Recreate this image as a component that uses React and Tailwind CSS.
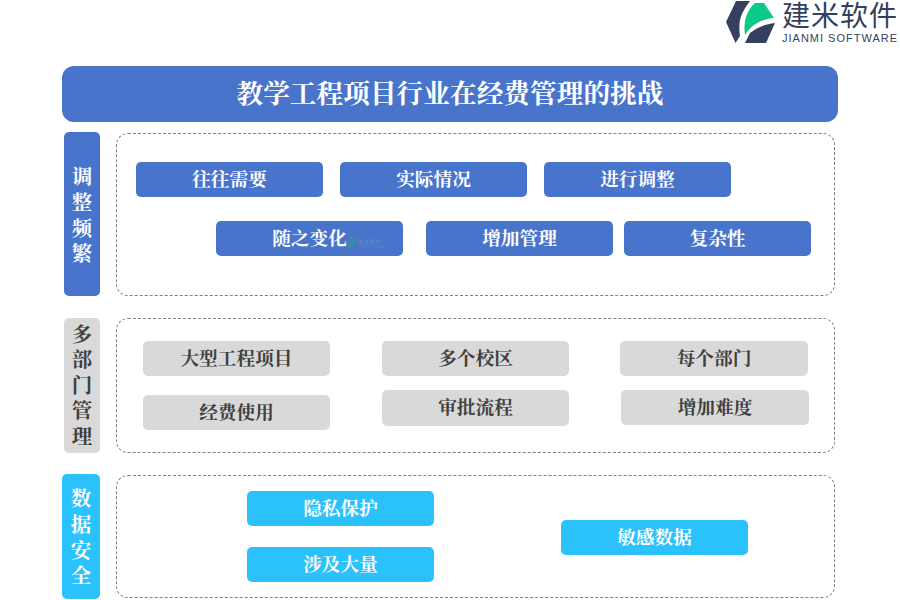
import React from 'react';

const font = "font-['Noto_Serif_CJK_SC','Liberation_Serif','Noto_Sans_CJK_SC',serif]";

const Chip = ({ text, color = 'blue', className = '', children }) => {
    const colors = {
        blue: 'bg-[#4874cb] text-white',
        gray: 'bg-[#d9d9d9] text-[#404040]',
        sky: 'bg-[#2bc1fa] text-white',
    };
    return (
        <div className={`relative flex h-[35px] w-[187px] shrink-0 items-center justify-center rounded-[5px] pb-[3px] text-[18.7px] font-bold ${colors[color]} ${className}`}>
            {text}
            {children}
        </div>
    );
};

const SideLabel = ({ chars, className }) => (
    <div className={`flex shrink-0 flex-col items-center justify-center rounded-[5px] text-[20.5px] font-bold leading-[25.6px] ${className}`}>
        {chars.split('').map((c) => (
            <span key={c}>{c}</span>
        ))}
    </div>
);

const Logo = () => (
    <svg width="56" height="44" viewBox="0 0 56 44" className="shrink-0">
        <path d="M14 1H28C22 9 18 16 17.500 24C17.200 29 17.500 33 18 36L13.500 43L4 22Z" fill="#353f5f" />
        <path d="M33 3H42L52 18C39 19 29 25 23 35C21 21 25 10 33 3Z" fill="#0cc98a" />
        <path d="M53 23L44 43H23L28 33C34 28 43 24 53 23Z" fill="#353f5f" />
    </svg>
);

const Watermark = () => (
    <span className="absolute left-[130px] top-[15px] flex items-center gap-[2px] opacity-70">
        <svg width="9" height="15" viewBox="0 0 9 15">
            <path d="M3 0H7L3 6L4 15H2L0 8Z" fill="#5f7fb0" />
            <path d="M5 2H9V8C7 9 5 11 4 13C3 9 3 5 5 2Z" fill="#2a9d9a" />
        </svg>
        <span className="flex flex-col font-['Noto_Sans_CJK_SC',sans-serif] font-normal text-[#6f8fc4]">
            <span className="text-[6px] leading-[7px]">建米软件</span>
            <span className="text-[3px] leading-[4px]">JIANMI SOFTWARE</span>
        </span>
    </span>
);

export default function App() {
    return (
        <div className={`h-[600px] w-[900px] overflow-hidden bg-white ${font}`}>
            {/* Header logo */}
            <div className="flex h-[66px] items-start justify-end pr-[2px]">
                <Logo />
                <div className="ml-[4px] flex w-[116px] flex-col">
                    <span className="-mt-[3px] whitespace-nowrap font-['Noto_Sans_CJK_SC',sans-serif] text-[28px] leading-[34px] tracking-[1px] text-[#353f5f]">建米软件</span>
                    <span className="mt-[1px] whitespace-nowrap font-['Liberation_Sans',sans-serif] text-[11px] leading-[12px] tracking-[1px] text-[#353f5f]">JIANMI SOFTWARE</span>
                </div>
            </div>

            {/* Title */}
            <div className="mx-[62px] flex h-[56px] items-center justify-center rounded-[12px] bg-[#4874cb] pb-[3px] text-[26.700px] font-bold text-white">
                教学工程项目行业在经费管理的挑战
            </div>

            {/* Adjustments */}
            <div className="mt-[10px] flex h-[164px] pl-[64px] pr-[65px]">
                <SideLabel chars="调整频繁" className="w-[36px] bg-[#4874cb] pt-[1px] text-white" />
                <div className="ml-[16px] mt-[1px] flex flex-1 flex-col gap-[24px] rounded-[12px] border border-dashed border-[#808080] pt-[28px]">
                    <div className="flex gap-[17px] pl-[19px]">
                        <Chip text="往往需要" />
                        <Chip text="实际情况" />
                        <Chip text="进行调整" />
                    </div>
                    <div className="flex pl-[99px]">
                        <Chip text="随之变化">
                            <Watermark />
                        </Chip>
                        <Chip text="增加管理" className="ml-[23px]" />
                        <Chip text="复杂性" className="ml-[11px]" />
                    </div>
                </div>
            </div>

            {/* Departments */}
            <div className="mt-[22px] flex h-[135px] pl-[64px] pr-[65px]">
                <SideLabel chars="多部门管理" className="w-[36px] bg-[#d9d9d9] pb-[2px] text-[#404040]" />
                <div className="ml-[16px] flex flex-1 rounded-[12px] border border-dashed border-[#808080] pt-[22px]">
                    <div className="ml-[26px] flex flex-col gap-[19px]">
                        <Chip color="gray" text="大型工程项目" />
                        <Chip color="gray" text="经费使用" />
                    </div>
                    <div className="ml-[52px] flex flex-col gap-[14px]">
                        <Chip color="gray" text="多个校区" />
                        <Chip color="gray" text="审批流程" className="!h-[36px]" />
                    </div>
                    <div className="ml-[51px] flex flex-col gap-[14px]">
                        <Chip color="gray" text="每个部门" className="!w-[188px]" />
                        <Chip color="gray" text="增加难度" className="ml-[1px] !w-[188px]" />
                    </div>
                </div>
            </div>

            {/* Data security */}
            <div className="mt-[21px] flex h-[125px] pl-[62px] pr-[65px]">
                <SideLabel chars="数据安全" className="w-[38px] bg-[#2bc1fa] text-white" />
                <div className="ml-[16px] mt-[1px] mb-[1px] flex flex-1 rounded-[12px] border border-dashed border-[#808080]">
                    <div className="ml-[130px] flex flex-col gap-[21px] pt-[15px]">
                        <Chip color="sky" text="隐私保护" />
                        <Chip color="sky" text="涉及大量" />
                    </div>
                    <div className="ml-[127px] pt-[44px]">
                        <Chip color="sky" text="敏感数据" />
                    </div>
                </div>
            </div>
        </div>
    );
}
